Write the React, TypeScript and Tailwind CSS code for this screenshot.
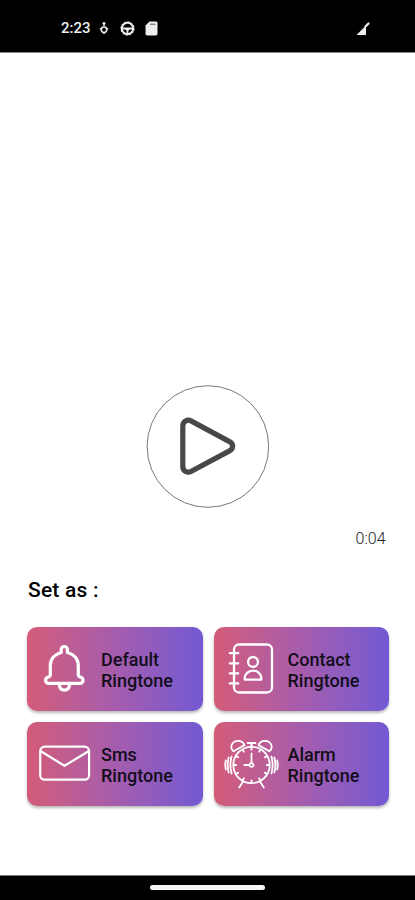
import type { ReactNode } from "react";

interface RingtoneCardProps {
  title: string;
  icon: ReactNode;
}

const iconProps = {
  width: 56,
  height: 56,
  viewBox: "0 0 56 56",
  fill: "none",
  stroke: "#fff",
  strokeLinecap: "round" as const,
  strokeLinejoin: "round" as const,
  className: "shrink-0",
};

const BellIcon = () => (
  <svg {...iconProps} strokeWidth={3.2}>
    <path d="M24.200 11.500V8.600a3.100 3.100 0 0 1 6.200 0v2.900c6.700 1.800 10.900 6.800 10.900 13v9.200c0 1.300.6 1.900 2 2.300 4 1.200 3.400 6.300-.5 6.300H11.800c-3.900 0-4.500-5.100-.5-6.300 1.400-.4 2-1 2-2.300v-9.200c0-6.200 4.200-11.200 10.900-13Z" />
    <path d="M22.300 43.500c.2 3.500 2.200 5.600 5.100 5.600s4.900-2.100 5.100-5.600" />
  </svg>
);

const ContactIcon = () => (
  <svg {...iconProps} strokeWidth={2.3}>
    <rect x="10" y="3.500" width="38" height="48" rx="5" />
    <path d="M5.800 12.200h8.400M5.800 22.300h8.400M5.800 32.300h8.400M5.800 42.400h8.400" />
    <circle cx="29" cy="20.900" r="4.900" />
    <path d="M20.700 38.600v-1.400a8.300 7.600 0 0 1 16.600 0v1.400Z" />
  </svg>
);

const SmsIcon = () => (
  <svg {...iconProps} strokeWidth={2.2}>
    <rect x="3.200" y="10.700" width="48.900" height="33" rx="4.500" />
    <path d="M3.800 15.200 27.500 29.800 51.500 15.200" />
  </svg>
);

const AlarmIcon = () => (
  <svg {...iconProps} strokeWidth={1.8}>
    <circle cx="27.500" cy="29" r="18.200" />
    {/* hour marks */}
    {Array.from({ length: 12 }, (_, i) => (
      <path key={i} d="M27.500 11.500v2.200" transform={`rotate(${i * 30} 27.500 29)`} />
    ))}
    <path d="M27.500 26.800V17.500M25.300 29H20.300" />
    <circle cx="27.500" cy="29" r="1.900" />
    <path d="M23.700 7h7.600M27.500 7v3" strokeWidth="2.200" />
    {/* bells */}
    <path d="M9.600 15.300C4.800 11.500 8.200 4.800 14.200 4.800c3 0 5.300 1.600 6.300 4.300Z" />
    <path d="M45.400 15.300C50.200 11.500 46.800 4.800 40.800 4.800c-3 0-5.300 1.600-6.300 4.300Z" />
    <path d="m19 45.500-3.800 6M36 45.500l3.800 6" />
    {/* vibration */}
    <path d="M1.800 24.500q-1 4.500 0 9M4.700 21.500q-2 7.500 0 15M7.600 20.500q-2.400 8.500 0 17" />
    <path d="M53.200 24.500q1 4.500 0 9M50.300 21.500q2 7.500 0 15M47.400 20.500q2.400 8.500 0 17" />
  </svg>
);

const RingtoneCard = ({ title, icon }: RingtoneCardProps) => {
  return (
    <button className="flex h-[84.5px] items-center gap-2 rounded-[10px] bg-linear-to-r from-[#d45b78] via-[#a65cad] to-[#7259d3] pl-2.5 text-left shadow-[0_2px_3px_rgba(0,0,0,0.28)]">
      {icon}
      <span className="w-20 pt-[2px] text-[18px] leading-[21px] font-medium text-[#120e1a]">
        {title}
      </span>
    </button>
  );
};

const StatusBar = () => (
  <header className="flex h-[52.500px] items-center border-b border-[#858585] bg-black pt-[5px] pl-[61px] text-[#eee]">
    <span className="w-[38px] text-[15px] leading-5 font-medium">2:23</span>
    <svg width="10" height="14" viewBox="0 0 10 14" fill="none" stroke="currentColor" strokeWidth="1.500">
      <path d="M5 1v4M3.500 2.500h3M1 7.500l1.200.7M9 7.500l-1.200.7M5 11.500V13" />
      <circle cx="5" cy="8.700" r="2.700" />
    </svg>
    <svg className="ml-[11px]" width="15" height="15" viewBox="0 0 15 15" fill="none" stroke="currentColor">
      <circle cx="7.500" cy="7.500" r="5.700" strokeWidth="2" />
      <circle cx="7.500" cy="7.500" r="6.700" strokeWidth="1" strokeDasharray="1.700 1.800" />
      <path d="M2 7.500h11M7.500 8v5" strokeWidth="1.800" />
      <path d="M5.500 7h4v1.500l-1 1h-2l-1-1Z" fill="currentColor" stroke="none" />
    </svg>
    <svg className="ml-[10px]" width="13" height="15" viewBox="0 0 13 15" fill="currentColor">
      <path d="M4.500.5h6.300c1 0 1.700.7 1.700 1.700v10.600c0 1-.7 1.700-1.700 1.700H2.200c-1 0-1.700-.7-1.700-1.700V4.500Z" />
      <path d="M5 3.200h5.500" stroke="#555" strokeWidth="1" />
    </svg>
    <svg className="mr-[43px] ml-auto" width="16" height="15" viewBox="0 0 16 15" fill="currentColor">
      <path d="M.5 14 10 4.500V14Z" />
      <path d="m9.500 5.500 3-3" stroke="currentColor" strokeWidth="2.200" strokeLinecap="round" />
    </svg>
  </header>
);

export default function App() {
  return (
    <div className="flex h-[900px] w-[415px] flex-col overflow-hidden bg-white font-['Roboto',sans-serif]">
      <StatusBar />
      <main className="flex flex-1 flex-col">
        <button className="mx-auto mt-[332.500px] h-[123px] w-[123px]">
          <svg width="123" height="123" viewBox="0 0 123 123" fill="none">
            <circle cx="61.900" cy="61.500" r="60.800" stroke="#686868" strokeWidth="0.900" />
            <path
              d="M36.800 41.300v39.900c0 5 4.500 7.300 8.600 5l38.100-20.300c4.200-2.300 4.200-7 0-9.300L45.400 36.100c-4.100-2.200-8.600.2-8.600 5.200Z"
              stroke="#484848"
              strokeWidth="5.200"
            />
          </svg>
        </button>
        <p className="mt-[21px] pr-[29.500px] text-right text-base leading-5 font-light text-[#222]">
          0:04
        </p>
        <h1 className="mt-[29px] pl-7 text-[21px] leading-6 font-medium tracking-[0.200px] text-black">
          Set as :
        </h1>
        <div className="mt-[24.500px] grid grid-cols-2 gap-x-[11px] gap-y-[10.500px] pr-[26px] pl-[27px]">
          <RingtoneCard title="Default Ringtone" icon={<BellIcon />} />
          <RingtoneCard title="Contact Ringtone" icon={<ContactIcon />} />
          <RingtoneCard title="Sms Ringtone" icon={<SmsIcon />} />
          <RingtoneCard title="Alarm Ringtone" icon={<AlarmIcon />} />
        </div>
      </main>
      <footer className="flex h-[25px] justify-center border-t border-[#777] bg-black pt-[9px]">
        <div className="h-[5px] w-[115px] rounded-full bg-[#f5f5f5]" />
      </footer>
    </div>
  );
}
